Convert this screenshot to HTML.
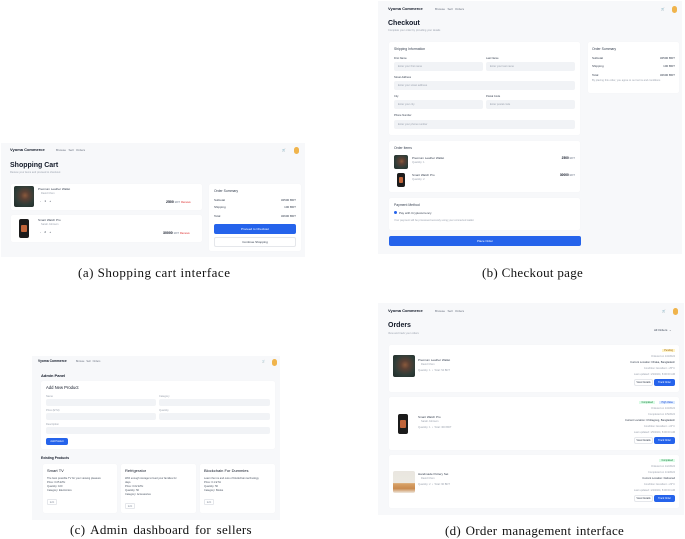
<!DOCTYPE html>
<html><head><meta charset="utf-8"><style>
*{margin:0;padding:0;box-sizing:border-box}
body{width:685px;height:539px;background:#fff;position:relative;overflow:hidden;font-family:"Liberation Sans",sans-serif;color:#111827}
.p{position:absolute;background:#f7f8fa}
.a{position:absolute;white-space:nowrap}
.c{position:absolute;background:#fff;border-radius:2px;box-shadow:0 0 0.5px #e5e7eb}
.cap{position:absolute;font-family:"Liberation Serif",serif;font-size:13px;color:#111;letter-spacing:0.3px;white-space:nowrap}
.nav{font-size:4px;font-weight:bold}
.nl{font-size:3px;color:#6b7280}
.t{font-size:3px;color:#374151}
.g{font-size:2.6px;color:#9ca3af}
.in{position:absolute;background:#f1f3f6;border-radius:2px}
.btn{position:absolute;background:#2563eb;border-radius:2px;color:#fff;font-size:3px;text-align:center}
.wal{position:absolute;border-radius:2px;background:radial-gradient(circle at 55% 45%,#8a5a3c 0,#5a4034 25%,#2f3d38 60%,#1f2a27 100%)}
.wat{position:absolute;background:#1b1b1b;border-radius:2px}
.wat:after{content:"";position:absolute;left:20%;right:20%;top:30%;bottom:30%;background:#c0643a;border-radius:1px}
.av{position:absolute;width:5px;height:7px;border-radius:3px;background:#f0b44c}
</style></head><body>

<!-- (a) -->
<div class="p" style="left:1px;top:143px;width:304px;height:114px">
 <div class="a nav" style="left:9px;top:4px">Vyoma Commerce</div>
 <div class="a nl" style="left:55px;top:5px">Browse&nbsp;&nbsp; Sell&nbsp;&nbsp; Orders</div>
 <div class="a nl" style="left:281px;top:5px">🛒</div><div class="av" style="left:293px;top:4px"></div>
 <div class="a" style="left:9px;top:19px;font-size:7px;font-weight:bold">Shopping Cart</div>
 <div class="a g" style="left:9px;top:28px">Review your items and proceed to checkout</div>
 <div class="c" style="left:10px;top:41px;width:191px;height:26px">
  <div class="wal" style="left:3px;top:2px;width:20px;height:21px"></div>
  <div class="a t" style="left:27px;top:3px">Premium Leather Wallet</div>
  <div class="a g" style="left:30px;top:8px">David Chen</div>
  <div class="a t" style="left:29px;top:15px">-&nbsp;&nbsp;&nbsp; 1 &nbsp;&nbsp; +</div>
  <div class="a" style="left:155px;top:16px;font-size:3.5px;font-weight:bold">2500 <span class="g">BDT</span> <span style="color:#dc2626;font-weight:normal;font-size:2.6px">Remove</span></div>
 </div>
 <div class="c" style="left:10px;top:72px;width:191px;height:27px">
  <div class="wat" style="left:8px;top:4px;width:10px;height:19px"></div>
  <div class="a t" style="left:27px;top:3px">Smart Watch Pro</div>
  <div class="a g" style="left:30px;top:8px">Sarah Johnson</div>
  <div class="a t" style="left:29px;top:15px">-&nbsp;&nbsp;&nbsp; 2 &nbsp;&nbsp; +</div>
  <div class="a" style="left:152px;top:16px;font-size:3.5px;font-weight:bold">30000 <span class="g">BDT</span> <span style="color:#dc2626;font-weight:normal;font-size:2.6px">Remove</span></div>
 </div>
 <div class="c" style="left:208px;top:41px;width:92px;height:67px">
  <div class="a t" style="left:5px;top:5px;font-size:3.4px">Order Summary</div>
  <div class="a t" style="left:5px;top:14px">Subtotal</div><div class="a t" style="right:5px;top:14px">32500 BDT</div>
  <div class="a t" style="left:5px;top:21px">Shipping</div><div class="a t" style="right:5px;top:21px">100 BDT</div>
  <div class="a t" style="left:5px;top:30px">Total</div><div class="a t" style="right:5px;top:30px">32600 BDT</div>
  <div class="btn" style="left:5px;top:40px;width:82px;height:10px;line-height:10px">Proceed to Checkout</div>
  <div class="a t" style="left:5px;top:53px;width:82px;height:10px;border:0.5px solid #e5e7eb;border-radius:2px;text-align:center;line-height:9px">Continue Shopping</div>
 </div>
</div>
<div class="cap" style="left:78px;top:265px;letter-spacing:0.5px">(a) Shopping cart interface</div>

<!-- (b) -->
<div class="p" style="left:378px;top:1px;width:304px;height:253px">
 <div class="a nav" style="left:10px;top:5px">Vyoma Commerce</div>
 <div class="a nl" style="left:57px;top:6px">Browse&nbsp;&nbsp; Sell&nbsp;&nbsp; Orders</div>
 <div class="a nl" style="left:283px;top:6px">🛒</div><div class="av" style="left:294px;top:5px"></div>
 <div class="a" style="left:10px;top:19px;font-size:7px;font-weight:bold">Checkout</div>
 <div class="a g" style="left:10px;top:28px">Complete your order by providing your details</div>
 <div class="c" style="left:11px;top:41px;width:191px;height:93px">
  <div class="a t" style="left:5px;top:5px;font-size:3.4px">Shipping Information</div>
  <div class="a t" style="left:5px;top:15px;font-size:2.6px">First Name</div><div class="a t" style="left:97px;top:15px;font-size:2.6px">Last Name</div>
  <div class="in" style="left:5px;top:20px;width:89px;height:9px"></div><div class="in" style="left:97px;top:20px;width:89px;height:9px"></div>
  <div class="a g" style="left:9px;top:23px">Enter your first name</div><div class="a g" style="left:101px;top:23px">Enter your last name</div>
  <div class="a t" style="left:5px;top:34px;font-size:2.6px">Street Address</div>
  <div class="in" style="left:5px;top:39px;width:181px;height:9px"></div><div class="a g" style="left:9px;top:42px">Enter your street address</div>
  <div class="a t" style="left:5px;top:53px;font-size:2.6px">City</div><div class="a t" style="left:97px;top:53px;font-size:2.6px">Postal Code</div>
  <div class="in" style="left:5px;top:58px;width:89px;height:9px"></div><div class="in" style="left:97px;top:58px;width:89px;height:9px"></div>
  <div class="a g" style="left:9px;top:61px">Enter your city</div><div class="a g" style="left:101px;top:61px">Enter postal code</div>
  <div class="a t" style="left:5px;top:72px;font-size:2.6px">Phone Number</div>
  <div class="in" style="left:5px;top:78px;width:181px;height:9px"></div><div class="a g" style="left:9px;top:81px">Enter your phone number</div>
 </div>
 <div class="c" style="left:210px;top:41px;width:91px;height:51px">
  <div class="a t" style="left:4px;top:5px;font-size:3.4px">Order Summary</div>
  <div class="a t" style="left:4px;top:14px">Subtotal</div><div class="a t" style="right:4px;top:14px">32500 BDT</div>
  <div class="a t" style="left:4px;top:22px">Shipping</div><div class="a t" style="right:4px;top:22px">100 BDT</div>
  <div class="a t" style="left:4px;top:31px">Total</div><div class="a t" style="right:4px;top:31px">32600 BDT</div>
  <div class="a g" style="left:4px;top:37px;white-space:normal;width:80px;line-height:3.5px">By placing this order, you agree to our terms and conditions</div>
 </div>
 <div class="c" style="left:11px;top:140px;width:191px;height:51px">
  <div class="a t" style="left:5px;top:5px;font-size:3.4px">Order Items</div>
  <div class="wal" style="left:5px;top:14px;width:14px;height:14px"></div>
  <div class="a t" style="left:23px;top:15px">Premium Leather Wallet</div><div class="a g" style="left:23px;top:20px">Quantity: 1</div>
  <div class="a" style="right:5px;top:15px;font-size:3.2px;font-weight:bold">2500 <span class="g">BDT</span></div>
  <div class="wat" style="left:8px;top:32px;width:8px;height:14px"></div>
  <div class="a t" style="left:23px;top:32px">Smart Watch Pro</div><div class="a g" style="left:23px;top:37px">Quantity: 2</div>
  <div class="a" style="right:5px;top:32px;font-size:3.2px;font-weight:bold">30000 <span class="g">BDT</span></div>
 </div>
 <div class="c" style="left:11px;top:197px;width:191px;height:32px">
  <div class="a t" style="left:5px;top:5px;font-size:3.4px">Payment Method</div>
  <div class="a" style="left:5px;top:13px;width:3px;height:3px;border-radius:50%;background:#2563eb"></div>
  <div class="a t" style="left:10px;top:13px">Pay with Cryptocurrency</div>
  <div class="a g" style="left:5px;top:21px">Your payment will be processed securely using your connected wallet</div>
 </div>
 <div class="btn" style="left:11px;top:235px;width:192px;height:10px;line-height:10px">Place Order</div>
</div>
<div class="cap" style="left:482px;top:265px">(b) Checkout page</div>

<!-- (c) -->
<div class="p" style="left:32px;top:356px;width:248px;height:164px">
 <div class="a nav" style="left:6px;top:3px;font-size:3.3px">Vyoma Commerce</div>
 <div class="a nl" style="left:44px;top:4px;font-size:2.5px">Browse&nbsp;&nbsp; Sell&nbsp;&nbsp; Orders</div>
 <div class="a nl" style="left:230px;top:4px;font-size:2.5px">🛒</div><div class="av" style="left:240px;top:3px"></div>
 <div class="a" style="left:9px;top:17px;font-size:4px;font-weight:bold">Admin Panel</div>
 <div class="c" style="left:9px;top:25px;width:234px;height:68px">
  <div class="a" style="left:5px;top:4px;font-size:4.2px">Add New Product</div>
  <div class="a g" style="left:5px;top:14px">Name</div><div class="a g" style="left:118px;top:14px">Category</div>
  <div class="in" style="left:5px;top:18px;width:110px;height:7px"></div><div class="in" style="left:118px;top:18px;width:111px;height:7px"></div>
  <div class="a g" style="left:5px;top:28px">Price (ETH)</div><div class="a g" style="left:118px;top:28px">Quantity</div>
  <div class="in" style="left:5px;top:32px;width:110px;height:7px"></div><div class="in" style="left:118px;top:32px;width:111px;height:7px"></div>
  <div class="a g" style="left:5px;top:42px">Description</div>
  <div class="in" style="left:5px;top:46px;width:224px;height:7px"></div>
  <div class="btn" style="left:5px;top:57px;width:22px;height:7px;line-height:7px;font-size:2.4px">Add Product</div>
 </div>
 <div class="a" style="left:9px;top:100px;font-size:3.3px;font-weight:bold">Existing Products</div>
 <div class="c" style="left:11px;top:108px;width:74px;height:49px">
  <div class="a" style="left:4px;top:4px;font-size:4px">Smart TV</div>
  <div class="a g" style="left:4px;top:13px;line-height:4px;color:#4b5563">The best possible TV for your viewing pleasure<br>Price: 0.05 ETH<br>Quantity: 100<br>Category: Electronics</div>
  <div class="a g" style="left:4px;top:35px;width:10px;height:6px;border:0.5px solid #e5e7eb;border-radius:1px;text-align:center;line-height:5px">Edit</div>
 </div>
 <div class="c" style="left:89px;top:108px;width:75px;height:49px">
  <div class="a" style="left:4px;top:4px;font-size:4px">Refrigerator</div>
  <div class="a g" style="left:4px;top:13px;line-height:4px;color:#4b5563">With enough storage to feed your families for<br>days.<br>Price: 0.02 ETH<br>Quantity: 50<br>Category: Accessories</div>
  <div class="a g" style="left:4px;top:39px;width:10px;height:6px;border:0.5px solid #e5e7eb;border-radius:1px;text-align:center;line-height:5px">Edit</div>
 </div>
 <div class="c" style="left:168px;top:108px;width:75px;height:49px">
  <div class="a" style="left:4px;top:4px;font-size:4px">Blockchain For Dummies</div>
  <div class="a g" style="left:4px;top:13px;line-height:4px;color:#4b5563">Learn the ins and outs of blockchain technology<br>Price: 0.1 ETH<br>Quantity: 50<br>Category: Books</div>
  <div class="a g" style="left:4px;top:35px;width:10px;height:6px;border:0.5px solid #e5e7eb;border-radius:1px;text-align:center;line-height:5px">Edit</div>
 </div>
</div>
<div class="cap" style="left:70px;top:522px;word-spacing:2px">(c) Admin dashboard for sellers</div>

<!-- (d) -->
<div class="p" style="left:378px;top:303px;width:306px;height:212px">
 <div class="a nav" style="left:10px;top:5px">Vyoma Commerce</div>
 <div class="a nl" style="left:57px;top:6px">Browse&nbsp;&nbsp; Sell&nbsp;&nbsp; Orders</div>
 <div class="a nl" style="left:284px;top:6px">🛒</div><div class="av" style="left:295px;top:5px"></div>
 <div class="a" style="left:10px;top:19px;font-size:7px;font-weight:bold">Orders</div>
 <div class="a g" style="left:10px;top:29px">View and track your orders</div>
 <div class="a t" style="left:276px;top:25px">All Orders &nbsp;⌄</div>

 <div class="c" style="left:11px;top:42px;width:290px;height:47px">
  <div class="wal" style="left:4px;top:10px;width:22px;height:22px"></div>
  <div class="a t" style="left:29px;top:13px">Premium Leather Wallet</div>
  <div class="a g" style="left:32px;top:18px">David Chen</div>
  <div class="a g" style="left:29px;top:24px">Quantity: 1 &nbsp;•&nbsp; Total: 54 BDT</div>
  <div class="a" style="right:4px;top:4px;font-size:2.4px;background:#fef3c7;color:#a16207;padding:0 2px">Pending</div>
  <div class="a g" style="right:4px;top:10px">Ordered on 1/3/2024</div>
  <div class="a t" style="right:4px;top:16px;font-size:2.7px">Current Location: Dhaka, Bangladesh</div>
  <div class="a g" style="right:4px;top:22px">Condition: Excellent • 25°C</div>
  <div class="a g" style="right:4px;top:28px">Last updated: 1/3/2024, 8:00:00 AM</div>
  <div class="a g" style="right:26px;top:34px;width:19px;height:7px;border:0.5px solid #e5e7eb;border-radius:2px;text-align:center;line-height:6px;color:#374151">View Details</div>
  <div class="btn" style="right:4px;top:34px;width:21px;height:7px;line-height:7px;font-size:2.4px">Track Order</div>
 </div>

 <div class="c" style="left:11px;top:94px;width:290px;height:53px">
  <div class="wat" style="left:9px;top:17px;width:10px;height:20px"></div>
  <div class="a t" style="left:29px;top:18px">Smart Watch Pro</div>
  <div class="a g" style="left:32px;top:23px">Sarah Johnson</div>
  <div class="a g" style="left:29px;top:29px">Quantity: 1 &nbsp;•&nbsp; Total: 300 BDT</div>
  <div class="a" style="right:24px;top:4px;font-size:2.4px;background:#dcfce7;color:#15803d;padding:0 2px">Completed</div>
  <div class="a" style="right:4px;top:4px;font-size:2.4px;background:#dbeafe;color:#1d4ed8;padding:0 2px">High Value</div>
  <div class="a g" style="right:4px;top:10px">Ordered on 1/3/2024</div>
  <div class="a g" style="right:4px;top:16px">Completed on 1/5/2024</div>
  <div class="a t" style="right:4px;top:22px;font-size:2.7px">Current Location: Chittagong, Bangladesh</div>
  <div class="a g" style="right:4px;top:28px">Condition: Excellent • 24°C</div>
  <div class="a g" style="right:4px;top:34px">Last updated: 1/5/2024, 8:00:00 AM</div>
  <div class="a g" style="right:26px;top:40px;width:19px;height:7px;border:0.5px solid #e5e7eb;border-radius:2px;text-align:center;line-height:6px;color:#374151">View Details</div>
  <div class="btn" style="right:4px;top:40px;width:21px;height:7px;line-height:7px;font-size:2.4px">Track Order</div>
 </div>

 <div class="c" style="left:11px;top:152px;width:290px;height:53px">
  <div class="a" style="left:4px;top:16px;width:22px;height:22px;border-radius:2px;background:linear-gradient(180deg,#e9e6df 0,#ece9e2 55%,#d9a46a 56%,#c98a4e 80%,#efe9df 100%)"></div>
  <div class="a t" style="left:29px;top:17px">Handmade Pottery Set</div>
  <div class="a g" style="left:32px;top:22px">David Chen</div>
  <div class="a g" style="left:29px;top:28px">Quantity: 2 &nbsp;•&nbsp; Total: 90 BDT</div>
  <div class="a" style="right:4px;top:4px;font-size:2.4px;background:#dcfce7;color:#15803d;padding:0 2px">Completed</div>
  <div class="a g" style="right:4px;top:10px">Ordered on 1/2/2024</div>
  <div class="a g" style="right:4px;top:16px">Completed on 1/4/2024</div>
  <div class="a t" style="right:4px;top:22px;font-size:2.7px">Current Location: Delivered</div>
  <div class="a g" style="right:4px;top:28px">Condition: Excellent • 23°C</div>
  <div class="a g" style="right:4px;top:34px">Last updated: 1/4/2024, 8:00:00 AM</div>
  <div class="a g" style="right:26px;top:40px;width:19px;height:7px;border:0.5px solid #e5e7eb;border-radius:2px;text-align:center;line-height:6px;color:#374151">View Details</div>
  <div class="btn" style="right:4px;top:40px;width:21px;height:7px;line-height:7px;font-size:2.4px">Track Order</div>
 </div>
</div>
<div class="cap" style="left:445px;top:523px;word-spacing:1px">(d) Order management interface</div>
</body></html>
